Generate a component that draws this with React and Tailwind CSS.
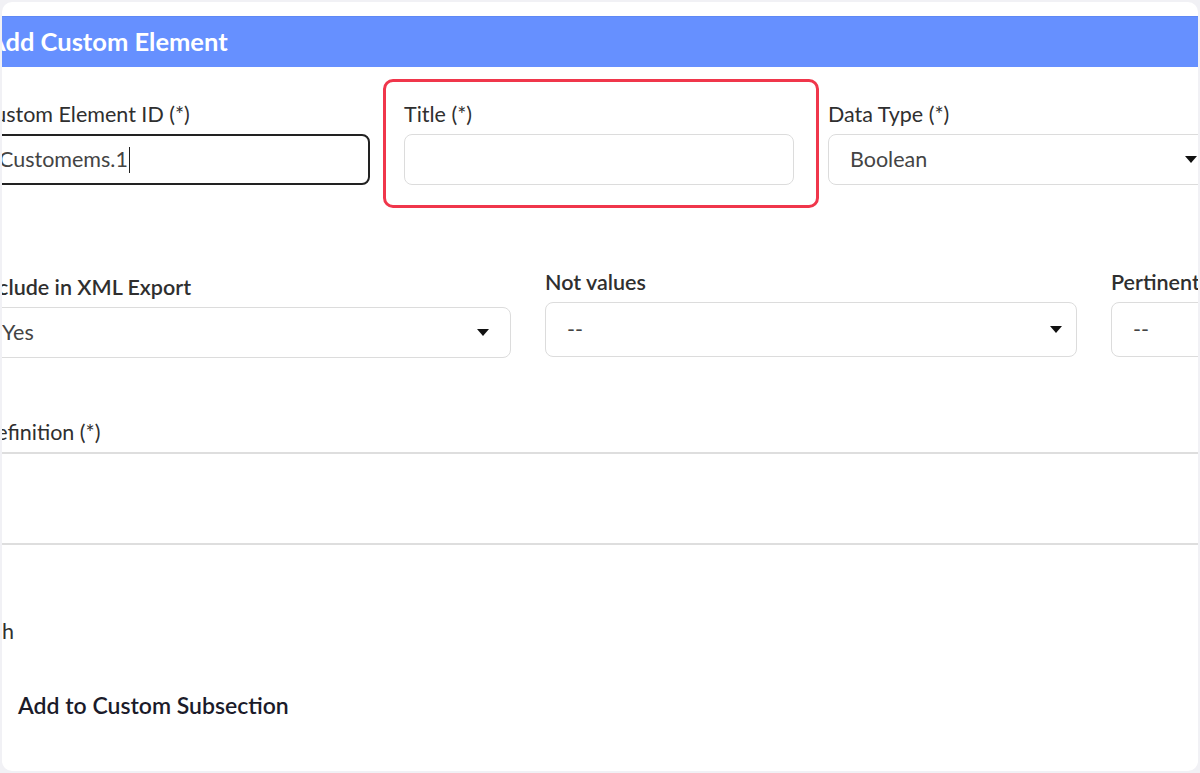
import React from "react";

function Caret() {
  return (
    <svg width="12" height="7" viewBox="0 0 12 7" className="shrink-0">
      <path d="M0 0 H12 L6 7 Z" fill="#111" />
    </svg>
  );
}

export default function App() {
  const font = { fontFamily: "Lato, 'Open Sans', sans-serif" };
  return (
    <div className="w-[1200px] h-[773px] bg-[#f1f1f5] p-[2px]" style={font}>
      <div className="w-full h-full bg-white rounded-[10px] overflow-hidden pt-[14px] flex flex-col">
        {/* header */}
        <div className="h-[51px] shrink-0 bg-[#6690ff] border-t border-[#5f88f5] flex items-center">
          <span className="ml-[-14px] text-[25.5px] font-bold text-white whitespace-nowrap leading-none">
            Add Custom Element
          </span>
        </div>

        <div className="ml-[-22px] w-[1260px] text-[#2f2f2f]">
          {/* row 1 */}
          <div className="flex gap-[34px] mt-[34px]">
            <div className="w-[390px] shrink-0">
              <div className="text-[21.5px] leading-[26px] whitespace-nowrap">Custom Element ID (*)</div>
              <div className="mt-[7px] h-[51px] border-2 border-[#222] rounded-[8px] flex items-center pl-[17px] text-[21.5px] text-[#444]">
                Customems.1<span className="inline-block w-px h-[26px] bg-[#222] ml-px"></span>
              </div>
            </div>
            <div className="w-[390px] shrink-0 relative">
              <div className="absolute left-[-21px] top-[-22px] w-[436px] h-[129px] border-[3px] border-[#f0364b] rounded-[10px] pointer-events-none"></div>
              <div className="text-[21.5px] leading-[26px]">Title (*)</div>
              <div className="mt-[7px] h-[51px] border border-[#dcdcdc] rounded-[8px]"></div>
            </div>
            <div className="w-[400px] shrink-0">
              <div className="text-[21.5px] leading-[26px]">Data Type (*)</div>
              <div className="mt-[7px] h-[51px] border border-[#dcdcdc] rounded-[8px] flex items-center justify-between pl-[21px] pr-[30px] text-[21.5px] text-[#444]">
                <span>Boolean</span>
                <Caret />
              </div>
            </div>
          </div>

          {/* row 2 */}
          <div className="flex items-start gap-[34px] mt-[84px]">
            <div className="w-[531px] shrink-0 mt-[5px]">
              <div className="text-[21.5px] leading-[26px] font-semibold whitespace-nowrap">Include in XML Export</div>
              <div className="mt-[7px] h-[51px] border border-[#dcdcdc] rounded-[8px] flex items-center justify-between pl-[21px] pr-[21px] text-[21.5px] text-[#444]">
                <span>Yes</span>
                <Caret />
              </div>
            </div>
            <div className="w-[532px] shrink-0">
              <div className="text-[21.5px] leading-[26px] font-semibold">Not values</div>
              <div className="mt-[7px] h-[55px] border border-[#dcdcdc] rounded-[8px] flex items-center justify-between pl-[21px] pr-[14px] text-[21.5px] text-[#444]">
                <span>--</span>
                <Caret />
              </div>
            </div>
            <div className="w-[300px] shrink-0">
              <div className="text-[21.5px] leading-[26px] font-semibold whitespace-nowrap">Pertinent</div>
              <div className="mt-[7px] h-[55px] border border-[#dcdcdc] rounded-[8px] flex items-center pl-[21px] text-[21.5px] text-[#444]">
                <span>--</span>
              </div>
            </div>
          </div>

          {/* definition */}
          <div className="mt-[61px]">
            <div className="text-[21.5px] leading-[26px] whitespace-nowrap">Definition (*)</div>
            <div className="mt-[7px] h-[93px] border-y-2 border-[#dedede] w-[1260px]"></div>
          </div>
        </div>

        <div className="mt-[73px] text-[21.5px] leading-[26px] text-[#2f2f2f]">h</div>

        <div className="mt-[47px] text-[23px] leading-[28px] font-semibold text-[#1b1b2a] pl-[16px]">
          Add to Custom Subsection
        </div>
      </div>
    </div>
  );
}
